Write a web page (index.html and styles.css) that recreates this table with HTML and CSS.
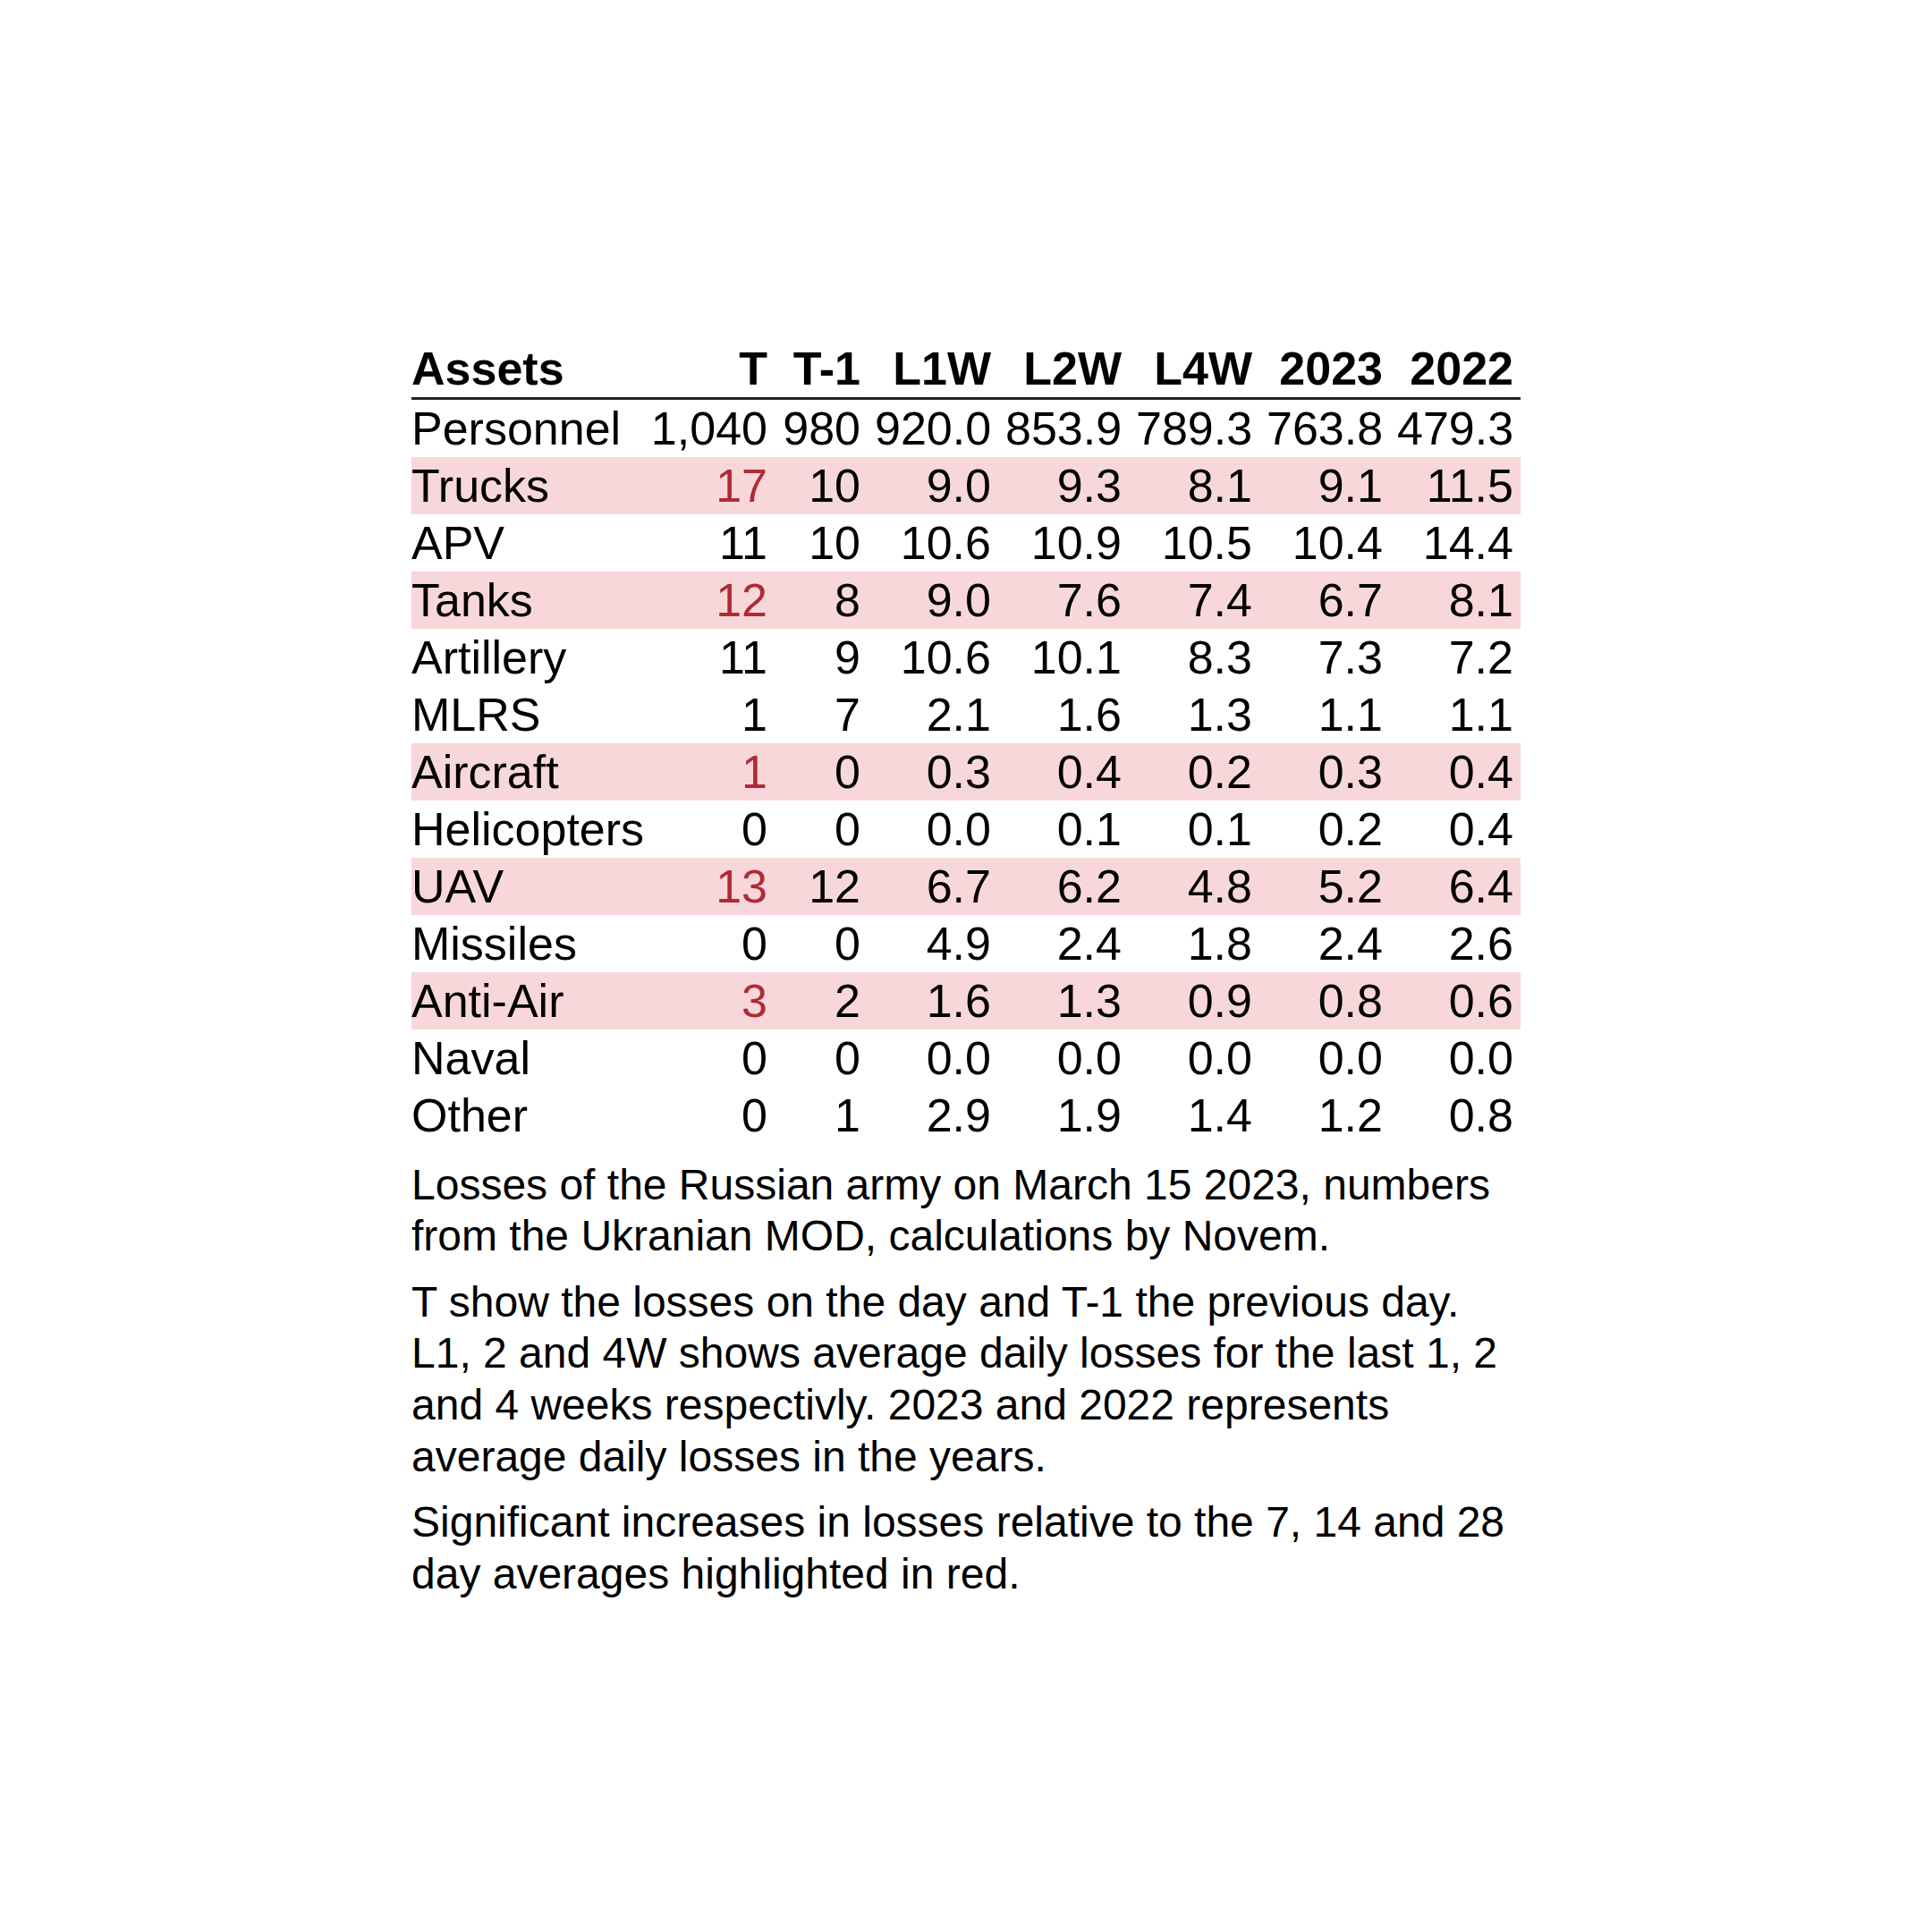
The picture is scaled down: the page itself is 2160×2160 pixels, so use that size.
FILE: index.html
```html
<!DOCTYPE html>
<html lang="en">
<head>
<meta charset="utf-8">
<title>Losses of the Russian army</title>
<link rel="stylesheet" href="styles.css">
</head>
<body>
<div class="page">
  <div class="report">
    <table class="losses">
      <colgroup>
        <col class="c-asset">
        <col class="c-t">
        <col class="c-t1">
        <col class="c-num">
        <col class="c-num">
        <col class="c-num">
        <col class="c-num">
        <col class="c-num">
      </colgroup>
      <thead>
        <tr>
          <th class="label">Assets</th>
          <th>T</th>
          <th>T-1</th>
          <th>L1W</th>
          <th>L2W</th>
          <th>L4W</th>
          <th>2023</th>
          <th>2022</th>
        </tr>
      </thead>
      <tbody>
        <tr><td class="label">Personnel</td><td>1,040</td><td>980</td><td>920.0</td><td>853.9</td><td>789.3</td><td>763.8</td><td>479.3</td></tr>
        <tr class="hl"><td class="label">Trucks</td><td class="up">17</td><td>10</td><td>9.0</td><td>9.3</td><td>8.1</td><td>9.1</td><td>11.5</td></tr>
        <tr><td class="label">APV</td><td>11</td><td>10</td><td>10.6</td><td>10.9</td><td>10.5</td><td>10.4</td><td>14.4</td></tr>
        <tr class="hl"><td class="label">Tanks</td><td class="up">12</td><td>8</td><td>9.0</td><td>7.6</td><td>7.4</td><td>6.7</td><td>8.1</td></tr>
        <tr><td class="label">Artillery</td><td>11</td><td>9</td><td>10.6</td><td>10.1</td><td>8.3</td><td>7.3</td><td>7.2</td></tr>
        <tr><td class="label">MLRS</td><td>1</td><td>7</td><td>2.1</td><td>1.6</td><td>1.3</td><td>1.1</td><td>1.1</td></tr>
        <tr class="hl"><td class="label">Aircraft</td><td class="up">1</td><td>0</td><td>0.3</td><td>0.4</td><td>0.2</td><td>0.3</td><td>0.4</td></tr>
        <tr><td class="label">Helicopters</td><td>0</td><td>0</td><td>0.0</td><td>0.1</td><td>0.1</td><td>0.2</td><td>0.4</td></tr>
        <tr class="hl"><td class="label">UAV</td><td class="up">13</td><td>12</td><td>6.7</td><td>6.2</td><td>4.8</td><td>5.2</td><td>6.4</td></tr>
        <tr><td class="label">Missiles</td><td>0</td><td>0</td><td>4.9</td><td>2.4</td><td>1.8</td><td>2.4</td><td>2.6</td></tr>
        <tr class="hl"><td class="label">Anti-Air</td><td class="up">3</td><td>2</td><td>1.6</td><td>1.3</td><td>0.9</td><td>0.8</td><td>0.6</td></tr>
        <tr><td class="label">Naval</td><td>0</td><td>0</td><td>0.0</td><td>0.0</td><td>0.0</td><td>0.0</td><td>0.0</td></tr>
        <tr><td class="label">Other</td><td>0</td><td>1</td><td>2.9</td><td>1.9</td><td>1.4</td><td>1.2</td><td>0.8</td></tr>
      </tbody>
    </table>
    <div class="notes">
      <p>Losses of the Russian army on March 15 2023, numbers from the Ukranian MOD, calculations by Novem.</p>
      <p>T show the losses on the day and T-1 the previous day. L1, 2 and 4W shows average daily losses for the last 1, 2 and 4 weeks respectivly. 2023 and 2022 represents average daily losses in the years.</p>
      <p>Significant increases in losses relative to the 7, 14 and 28 day averages highlighted in red.</p>
    </div>
  </div>
</div>
</body>
</html>
```

FILE: styles.css
```css
html, body {
  margin: 0;
  padding: 0;
  background: #ffffff;
}

body {
  font-family: "Liberation Sans", Arial, sans-serif;
  color: #000000;
}

.page {
  min-height: 100vh;
  box-sizing: border-box;
  padding-top: 8px;
  display: flex;
  align-items: center;
  justify-content: center;
}

.report {
  width: 1240px;
  display: flex;
  flex-direction: column;
  gap: 17px;
}

.losses {
  width: 1240px;
  table-layout: fixed;
  border-collapse: collapse;
  font-size: 52px;
}

.c-asset { width: 258px; }
.c-t { width: 148px; }
.c-t1 { width: 104px; }
.c-num { width: 146px; }

.losses th,
.losses td {
  height: 64px;
  padding: 0 8px;
  line-height: 64px;
  text-align: right;
  white-space: nowrap;
  vertical-align: middle;
}

.losses th {
  font-weight: bold;
  border-bottom: 3px solid #222222;
}

.losses .label {
  text-align: left;
  padding-left: 0;
}

.losses tr.hl td {
  background: #f8d7da;
}

.losses td.up {
  color: #b02a37;
}

.notes {
  font-size: 48px;
  line-height: 57.6px;
  display: flex;
  flex-direction: column;
  gap: 16px;
}

.notes p {
  margin: 0;
}
```
